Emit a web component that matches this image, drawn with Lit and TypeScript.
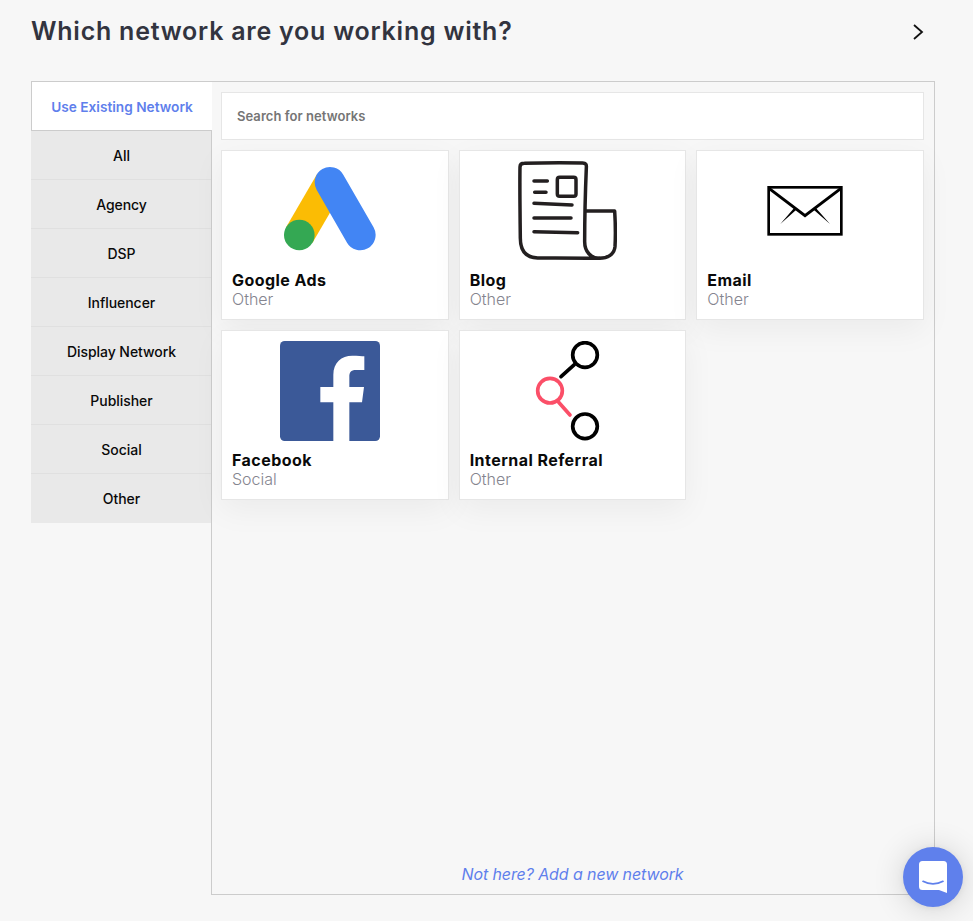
import { LitElement, html, css, svg } from "lit";
import { customElement } from "lit/decorators.js";

const icons: Record<string, unknown> = {
  google: svg`<svg class="img" viewBox="0 0 100 100">
    <path d="M19.3 74L50 21.3" stroke="#fbbc04" stroke-width="30.6" fill="none"/>
    <path d="M50 21.3L80.3 74" stroke="#4285f4" stroke-width="30.6" stroke-linecap="round" fill="none"/>
    <circle cx="19.3" cy="74" r="15.3" fill="#34a853"/></svg>`,
  blog: svg`<svg class="img" viewBox="178 48 300 300" fill="none" stroke="#231f20" stroke-width="10.5" stroke-linecap="round" stroke-linejoin="round">
    <path d="M240 339C205 338 188 318 188 280C187 200 186 120 187 66C187 58 192 55 200 55C260 53 320 53 375 54C384 54 387 58 386 68C383 140 381 220 381 290C381 320 400 340 425 340C300 338 270 339 240 339Z"/>
    <path d="M385 198H471C473 230 474 270 472 305C470 328 450 340 425 340"/>
    <path d="M229 108H269M231 142H265M229 175L343 180M229 219H340M229 260L360 263"/>
    <rect x="299" y="97" width="56" height="57" rx="7"/></svg>`,
  email: svg`<svg class="img" viewBox="180 48 300 300" fill="none" stroke="#000">
    <rect x="221" y="127" width="218" height="141" stroke-width="8"/>
    <path d="M222 130L330 212L438 130" stroke-width="9"/>
    <path d="M298 188L304 194L256 237Z M362 188L356 194L405 237Z" fill="#000" stroke="none"/></svg>`,
  facebook: svg`<svg class="img" viewBox="180 48 300 300">
    <rect x="180" y="48" width="300" height="300" rx="14" fill="#3b5998"/>
    <path fill="#fff" d="M340 348V232H301V186H340V150C340 112 364 92 397 92C413 92 426 93 433 94V135L408 135C392 135 388 143 388 155V186H432L426 232H388V348Z"/></svg>`,
  referral: svg`<svg class="img" viewBox="178 48 300 300" fill="none" stroke="#000" stroke-width="11" stroke-linecap="round">
    <circle cx="382" cy="90" r="37"/>
    <circle cx="382" cy="304" r="37"/>
    <path d="M310 155L350 119"/>
    <g stroke="#fb4f68"><circle cx="277" cy="197" r="37"/><path d="M303 232L337 270"/></g></svg>`,
};

const cats = ["All", "Agency", "DSP", "Influencer", "Display Network", "Publisher", "Social", "Other"];
const nets = [
  { name: "Google Ads", sub: "Other", icon: "google" },
  { name: "Blog", sub: "Other", icon: "blog" },
  { name: "Email", sub: "Other", icon: "email" },
  { name: "Facebook", sub: "Social", icon: "facebook" },
  { name: "Internal Referral", sub: "Other", icon: "referral" },
];

@customElement("app-root")
export class AppRoot extends LitElement {
  static styles = css`
    :host { display: block; height: 921px; background: #f7f7f7; font-family: Inter, "Liberation Sans", sans-serif; position: relative; overflow: hidden; }
    .head { display: flex; justify-content: space-between; align-items: center; height: 62px; margin-bottom: 19px; padding: 0 48px 0 31px; }
    h1 { margin: 0; font-size: 25px; font-weight: 600; color: #32343f; letter-spacing: 0.76px; }
    .chev { width: 12px; height: 16px; display: block; margin-top: 2px; }
    .box { display: flex; margin: 0 38px 0 31px; height: 814px; box-sizing: border-box; border-top: 1px solid #ccc; border-right: 1px solid #ccc; }
    .side { width: 180px; flex: none; border-right: 1px solid #ccc; }
    .tab { height: 47px; padding-top: 1px; margin-right: -1px; display: flex; align-items: center; justify-content: center; background: #fff; border-left: 1px solid #ccc; border-bottom: 1px solid #ccc; color: #5f7fec; font-size: 13.7px; font-weight: 600; }
    .cat { height: 47px; padding: 1px 0 0 1px; display: flex; align-items: center; justify-content: center; background: #e9e9e9; border-bottom: 1px solid #e0e0e0; font-size: 14px; font-weight: 500; color: #0a0a0a; letter-spacing: -0.05px; }
    .cat:last-child { border-bottom: 1px solid #e9e9e9; }
    .main { flex: 1; min-width: 0; display: flex; flex-direction: column; padding: 10px 10px 0 9px; border-bottom: 1px solid #ccc; }
    .search { height: 48px; box-sizing: border-box; flex: none; display: flex; align-items: center; padding-left: 15px; background: #fff; border: 1px solid #e6e6e6; font-size: 13px; font-weight: 600; color: #757575; letter-spacing: 0.05px; }
    .grid { display: grid; grid-template-columns: repeat(3, 1fr); gap: 10px; margin-top: 10px; }
    .card { height: 170px; box-sizing: border-box; background: #fff; border: 1px solid #e6e6e6; padding: 10px 20px 0 10px; box-shadow: 0 10px 30px rgba(0,0,0,.05); }
    .img { display: block; width: 100px; height: 100px; margin: 0 auto; }
    .name { margin-top: 9px; font-size: 16px; line-height: 20px; font-weight: 700; color: #0a0a0a; letter-spacing: 0.45px; }
    .sub { font-size: 16px; line-height: 19px; font-weight: 300; color: #85858f; }
    .add { margin-top: auto; height: 40px; display: flex; align-items: center; justify-content: center; font-size: 16px; font-style: italic; color: #5f7fec; letter-spacing: -0.1px; }
    .chat { position: absolute; left: 903px; top: 847px; width: 60px; height: 60px; border-radius: 50%; background: #5f80ec; box-shadow: 0 1px 6px rgba(0,0,0,.06), 0 2px 32px rgba(0,0,0,.16); display: flex; align-items: center; justify-content: center; }
    .chat svg { display: block; width: 28px; height: 32px; }
  `;

  render() {
    return html`
      <div class="head">
        <h1>Which network are you working with?</h1>
        <svg class="chev" viewBox="0 0 12 16" fill="none" stroke="#111" stroke-width="1.8"><path d="M1 1L9 8L1 15"/></svg>
      </div>
      <div class="box">
        <div class="side">
          <div class="tab">Use Existing Network</div>
          ${cats.map((c) => html`<div class="cat">${c}</div>`)}
        </div>
        <div class="main">
          <div class="search">Search for networks</div>
          <div class="grid">
            ${nets.map((n) => html`<div class="card">${icons[n.icon]}<div class="name">${n.name}</div><div class="sub">${n.sub}</div></div>`)}
          </div>
          <div class="add">Not here? Add a new network</div>
        </div>
      </div>
      <div class="chat">
        <svg viewBox="0 0 28 32"><path fill="#fff" d="M3.5 0H24.5A3.5 3.5 0 0 1 28 3.5V32L20 29H3.5A3.5 3.5 0 0 1 0 25.5V3.5A3.5 3.5 0 0 1 3.5 0Z"/><path d="M4 20.3C10 23.6 18 23.6 24 20.3" fill="none" stroke="#5f80ec" stroke-width="1.7" stroke-linecap="round"/></svg>
      </div>
    `;
  }
}
